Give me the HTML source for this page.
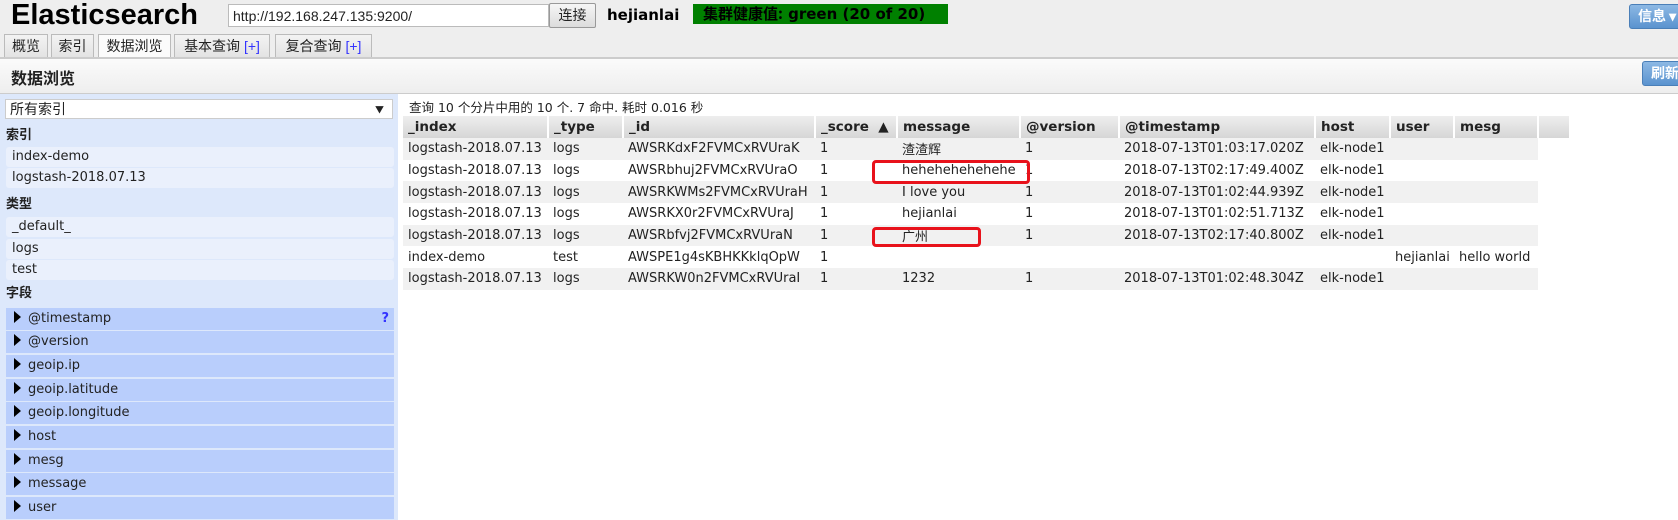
<!DOCTYPE html>
<html><head><meta charset="utf-8">
<style>
*{box-sizing:border-box;margin:0;padding:0}
body{width:1678px;height:520px;overflow:hidden;background:#eeeeee;font-family:"DejaVu Sans","Noto Sans CJK SC",sans-serif;font-size:12.5px;color:#222;position:relative}
.abs{position:absolute}
#title{left:11px;top:-1px;font-family:"Liberation Sans",sans-serif;font-weight:bold;font-size:29px;color:#000}
#url{left:228px;top:4px;width:321px;height:23px;background:#fff;border:1px solid #bbb;font-family:"Liberation Sans",sans-serif;font-size:14px;padding:3px 4px}
#conn{left:549px;top:3px;width:47px;height:25px;background:linear-gradient(#f6f6f6,#dcdcdc);border:1px solid #999;border-radius:2px;font-size:14px;text-align:center;line-height:23px;font-family:"Noto Sans CJK SC",sans-serif}
#user{left:607px;top:6px;font-weight:bold;font-size:15px;color:#000}
#badge{left:693px;top:4px;width:255px;height:20px;background:#008000;color:#000;font-weight:bold;font-size:15px;line-height:20px;padding-left:10px;white-space:nowrap}
.bbtn{background:linear-gradient(#8cb8e4,#5a93cf);border:1px solid #4a7fb8;border-radius:3px;color:#fff;font-weight:bold;font-size:14px;line-height:22px;padding-left:8px;font-family:"Noto Sans CJK SC",sans-serif;white-space:nowrap;overflow:hidden}
.tab{top:34px;height:23px;border:1px solid #bbb;border-bottom:none;background:linear-gradient(#f3f3f3,#e3e3e3);font-size:14px;text-align:center;line-height:22px;font-family:"Liberation Sans","Noto Sans CJK SC",sans-serif}
.tab b{color:#33f;font-weight:normal}
#sub{left:0;top:57px;width:1678px;height:37px;background:linear-gradient(#fbfbfb,#eeeeee);border-top:2px solid #ccc;border-bottom:1px solid #ccc}
#sub span{position:absolute;left:11px;top:6px;font-weight:bold;font-size:16px;font-family:"Noto Sans CJK SC",sans-serif}
#left{left:0;top:94px;width:398px;height:426px;background:#dde8fb}
#right{left:398px;top:94px;width:1280px;height:426px;background:#fff}
#sel{left:5px;top:99px;width:388px;height:20px;background:#fff;border:1px solid #ccc;font-size:14px;padding-left:4px;line-height:18px;font-family:"Noto Sans CJK SC",sans-serif}
#sel i{position:absolute;right:8px;top:1px;font-style:normal;font-size:9px}
.lab{left:6px;font-weight:bold;font-size:13px;font-family:"Noto Sans CJK SC",sans-serif}
.it{left:6px;width:388px;height:20px;background:#eaf0fc;border-radius:3px;padding-left:6px;line-height:20px;font-size:13px}
.fd{left:6px;width:388px;height:22px;background:#b9cefc;padding-left:8px;line-height:22px;font-size:13px}
.fd:before{content:"";display:inline-block;border-left:7px solid #000;border-top:6px solid transparent;border-bottom:6px solid transparent;margin-right:7px;vertical-align:-1px}
#info{left:409px;top:97px;font-size:12.5px;font-family:"DejaVu Sans","Noto Sans CJK SC",sans-serif}
table{position:absolute;left:403px;top:116px;border-collapse:collapse;table-layout:fixed;width:1167px}
th{height:22px;background:linear-gradient(#eeeeee,#d6d6d6);text-align:left;font-size:13.5px;padding-left:5px;border-right:2px solid #fff;white-space:nowrap}
td{height:21.7px;padding-left:5px;white-space:nowrap;overflow:hidden;font-size:13px;font-family:"DejaVu Sans","Noto Sans CJK SC",sans-serif}
tr.g td{background:#f1f1f1}
tr td:last-child{background:#fff!important}
.red{position:absolute;border:3px solid #e8121b;border-radius:4px}
</style></head><body>
<div id="title" class="abs">Elasticsearch</div>
<div id="url" class="abs">http://192.168.247.135:9200/</div>
<div id="conn" class="abs">连接</div>
<div id="user" class="abs">hejianlai</div>
<div id="badge" class="abs"><span style="font-family:'Noto Sans CJK SC',sans-serif">集群健康值:</span> green (20 of 20)</div>
<div class="abs bbtn" style="left:1629px;top:4px;width:55px;height:25px">信息 ▾</div>
<div class="abs tab" style="left:4px;width:44px">概览</div>
<div class="abs tab" style="left:51px;width:43px">索引</div>
<div class="abs tab" style="left:98px;width:73px;background:#fbfbfb;height:24px">数据浏览</div>
<div class="abs tab" style="left:174px;width:96px">基本查询 <b>[+]</b></div>
<div class="abs tab" style="left:275px;width:97px">复合查询 <b>[+]</b></div>
<div id="sub" class="abs"><span>数据浏览</span></div>
<div class="abs bbtn" style="left:1642px;top:61px;width:45px;height:25px">刷新</div>
<div id="left" class="abs"></div>
<div id="right" class="abs"></div>
<div id="sel" class="abs">所有索引<i>▼</i></div>
<div class="abs lab" style="top:124px">索引</div>
<div class="abs it" style="top:147px">index-demo</div>
<div class="abs it" style="top:168px">logstash-2018.07.13</div>
<div class="abs lab" style="top:193px">类型</div>
<div class="abs it" style="top:217px">_default_</div>
<div class="abs it" style="top:239px">logs</div>
<div class="abs it" style="top:260px">test</div>
<div class="abs lab" style="top:282px">字段</div>
<div class="abs fd" style="top:308px">@timestamp<span style="position:absolute;right:5px;color:#33f;font-weight:bold">?</span></div>
<div class="abs fd" style="top:331px">@version</div>
<div class="abs fd" style="top:355px">geoip.ip</div>
<div class="abs fd" style="top:379px">geoip.latitude</div>
<div class="abs fd" style="top:402px">geoip.longitude</div>
<div class="abs fd" style="top:426px">host</div>
<div class="abs fd" style="top:450px">mesg</div>
<div class="abs fd" style="top:473px">message</div>
<div class="abs fd" style="top:497px">user</div>
<div id="info" class="abs">查询 10 个分片中用的 10 个. 7 命中. 耗时 0.016 秒</div>
<table>
<colgroup><col style="width:145px"><col style="width:75px"><col style="width:192px"><col style="width:82px"><col style="width:123px"><col style="width:99px"><col style="width:196px"><col style="width:75px"><col style="width:64px"><col style="width:84px"><col style="width:32px"></colgroup>
<tr><th>_index</th><th>_type</th><th>_id</th><th>_score &nbsp;▲</th><th>message</th><th>@version</th><th>@timestamp</th><th>host</th><th>user</th><th>mesg</th><th></th></tr>
<tr class="g"><td>logstash-2018.07.13</td><td>logs</td><td>AWSRKdxF2FVMCxRVUraK</td><td>1</td><td>渣渣辉</td><td>1</td><td>2018-07-13T01:03:17.020Z</td><td>elk-node1</td><td></td><td></td><td></td></tr>
<tr><td>logstash-2018.07.13</td><td>logs</td><td>AWSRbhuj2FVMCxRVUraO</td><td>1</td><td>hehehehehehehe</td><td>1</td><td>2018-07-13T02:17:49.400Z</td><td>elk-node1</td><td></td><td></td><td></td></tr>
<tr class="g"><td>logstash-2018.07.13</td><td>logs</td><td>AWSRKWMs2FVMCxRVUraH</td><td>1</td><td>I love you</td><td>1</td><td>2018-07-13T01:02:44.939Z</td><td>elk-node1</td><td></td><td></td><td></td></tr>
<tr><td>logstash-2018.07.13</td><td>logs</td><td>AWSRKX0r2FVMCxRVUraJ</td><td>1</td><td>hejianlai</td><td>1</td><td>2018-07-13T01:02:51.713Z</td><td>elk-node1</td><td></td><td></td><td></td></tr>
<tr class="g"><td>logstash-2018.07.13</td><td>logs</td><td>AWSRbfvj2FVMCxRVUraN</td><td>1</td><td>广州</td><td>1</td><td>2018-07-13T02:17:40.800Z</td><td>elk-node1</td><td></td><td></td><td></td></tr>
<tr><td>index-demo</td><td>test</td><td>AWSPE1g4sKBHKKklqOpW</td><td>1</td><td></td><td></td><td></td><td></td><td>hejianlai</td><td>hello world</td><td></td></tr>
<tr class="g"><td>logstash-2018.07.13</td><td>logs</td><td>AWSRKW0n2FVMCxRVUraI</td><td>1</td><td>1232</td><td>1</td><td>2018-07-13T01:02:48.304Z</td><td>elk-node1</td><td></td><td></td><td></td></tr>
</table>
<div class="red" style="left:872px;top:160px;width:158px;height:24px"></div>
<div class="red" style="left:872px;top:227px;width:109px;height:20px"></div>
</body></html>
